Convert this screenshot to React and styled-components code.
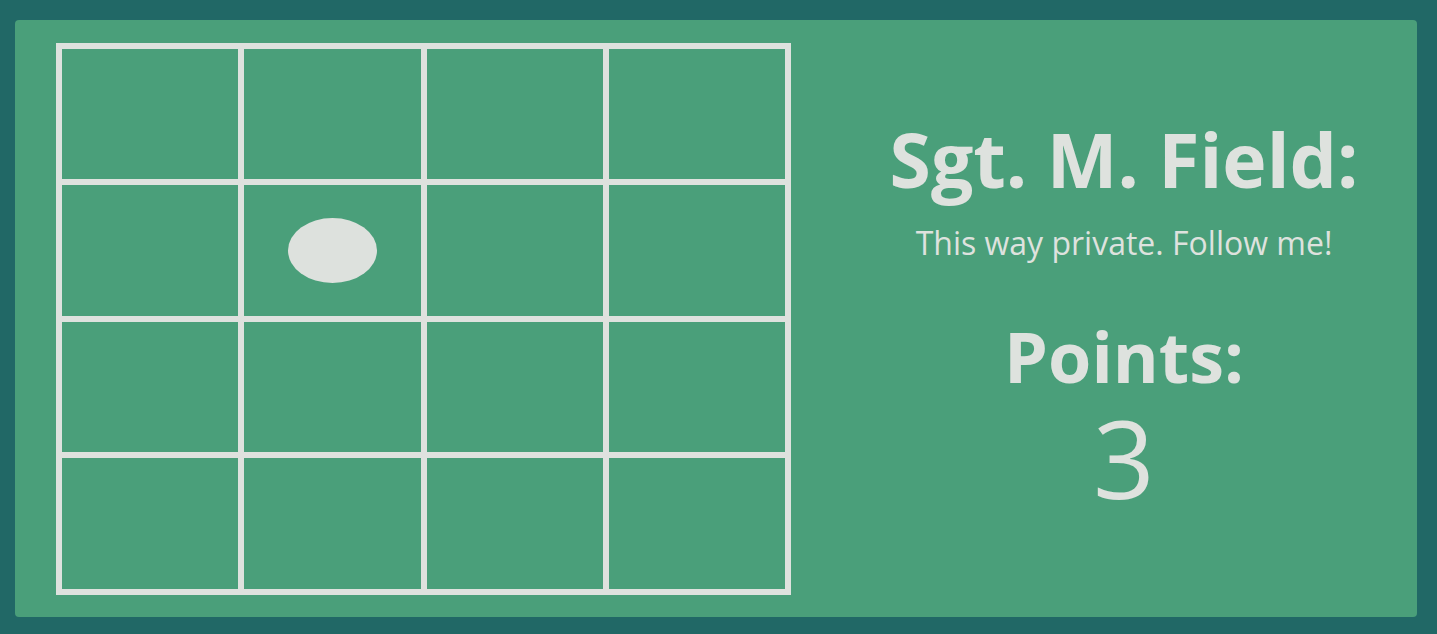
import styled, { createGlobalStyle } from 'styled-components'

const GlobalStyle = createGlobalStyle`
  html, body {
    margin: 0;
    padding: 0;
    background: #216866;
  }
  body {
    font-family: "Open Sans", "Noto Sans", sans-serif;
  }
`

const Page = styled.div`
  box-sizing: border-box;
  width: 1437px;
  height: 634px;
  padding: 20px 20px 17px 15px;
`

const Card = styled.div`
  height: 100%;
  display: flex;
  align-items: center;
  padding-left: 41px;
  background: #4a9f7a;
  border-radius: 4px;
`

const Board = styled.div`
  box-sizing: border-box;
  width: 735px;
  height: 552px;
  display: grid;
  grid-template-columns: repeat(4, 1fr);
  grid-template-rows: repeat(4, 1fr);
  border: 3px solid #dee2de;
`

const Cell = styled.div`
  border: 3px solid #dee2de;
  display: flex;
  align-items: center;
  justify-content: center;
`

const Dot = styled.div`
  width: 89px;
  height: 65px;
  border-radius: 50%;
  background: #dde1dd;
`

const Info = styled.div`
  flex: 1;
  align-self: stretch;
  padding: 94px 0 0 40px;
  display: flex;
  flex-direction: column;
  align-items: center;
  color: #dee2de;
`

const Title = styled.h1`
  margin: 0;
  font-size: 75px;
  line-height: 90px;
  font-weight: 700;
  white-space: nowrap;
`

const Message = styled.p`
  margin: 19px 0 0;
  font-size: 32px;
  line-height: 40px;
  white-space: nowrap;
`

const Label = styled.h2`
  margin: 53px 0 0;
  font-size: 70px;
  line-height: 80px;
  font-weight: 700;
`

const Score = styled.div`
  margin-top: 7px;
  font-size: 108px;
  line-height: 110px;
  font-weight: 400;
`

const cells = Array.from({ length: 16 }, (_, i) => i)
const dotAt = 5

export default function App() {
  return (
    <>
      <GlobalStyle />
      <Page>
        <Card>
          <Board>
            {cells.map(i => (
              <Cell key={i}>{i === dotAt && <Dot />}</Cell>
            ))}
          </Board>
          <Info>
            <Title>Sgt. M. Field:</Title>
            <Message>This way private. Follow me!</Message>
            <Label>Points:</Label>
            <Score>3</Score>
          </Info>
        </Card>
      </Page>
    </>
  )
}
